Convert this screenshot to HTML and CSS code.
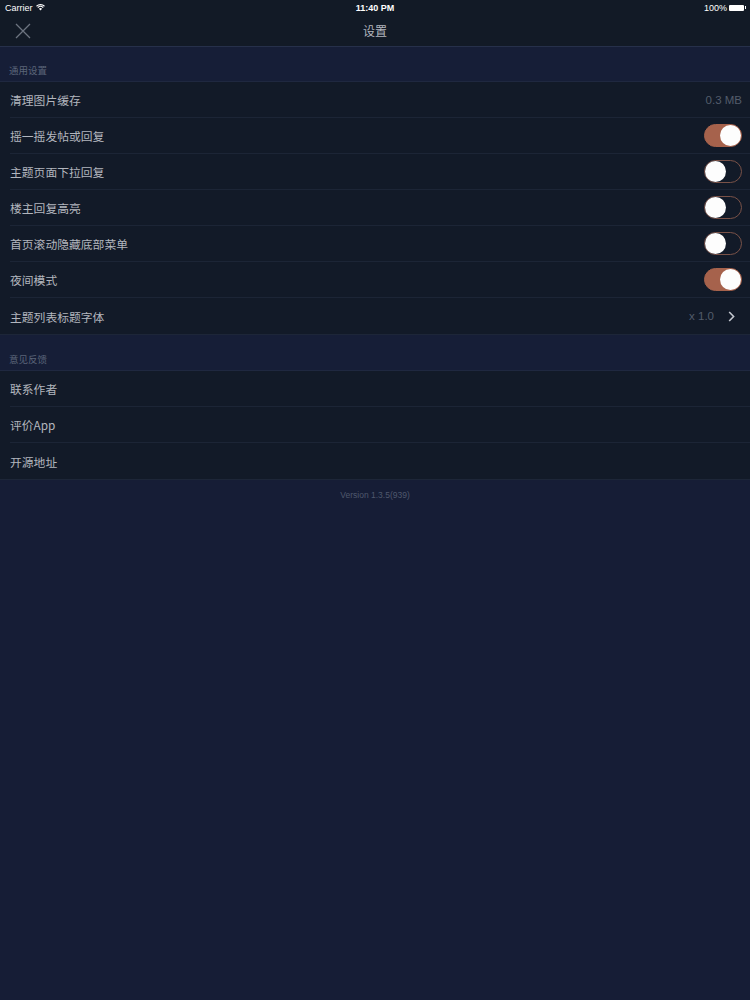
FILE: index.html
```html
<!DOCTYPE html>
<html lang="zh">
<head>
<meta charset="utf-8">
<link rel="stylesheet" href="styles.css">
</head>
<body>
<div class="top">
  <div class="status">
    <div class="st-left">Carrier
      <svg class="wifi" width="9" height="7" viewBox="0 0 12 9"><path d="M6 8.6 L3.9 6.2 A3 3 0 0 1 8.1 6.2 Z" fill="#fff"/><path d="M2.4 4.6 A5.2 5.2 0 0 1 9.6 4.6" stroke="#fff" stroke-width="1.5" fill="none"/><path d="M0.7 2.8 A7.6 7.6 0 0 1 11.3 2.8" stroke="#fff" stroke-width="1.5" fill="none"/></svg>
    </div>
    <div class="st-time">11:40 PM</div>
    <div class="st-right">100%
      <span class="battery"><span class="batt-body"></span><span class="batt-tip"></span></span>
    </div>
  </div>
  <div class="nav">
    <svg class="close" width="16" height="16" viewBox="0 0 16 16"><path d="M1 1 L15 15 M15 1 L1 15" stroke="#6d7481" stroke-width="1.3" fill="none"/></svg>
    <div class="title">设置</div>
  </div>
</div>

<div class="sec-head">通用设置</div>
<div class="group">
  <div class="row"><span class="label">清理图片缓存</span><span class="value">0.3 MB</span></div>
  <div class="row"><span class="label">摇一摇发帖或回复</span><span class="switch on"><span class="knob"></span></span></div>
  <div class="row"><span class="label">主题页面下拉回复</span><span class="switch"><span class="knob"></span></span></div>
  <div class="row"><span class="label">楼主回复高亮</span><span class="switch"><span class="knob"></span></span></div>
  <div class="row"><span class="label">首页滚动隐藏底部菜单</span><span class="switch"><span class="knob"></span></span></div>
  <div class="row"><span class="label">夜间模式</span><span class="switch on"><span class="knob"></span></span></div>
  <div class="row"><span class="label">主题列表标题字体</span><span class="value">x 1.0</span>
    <svg class="chev" width="7" height="11" viewBox="0 0 7 11"><path d="M1.2 1 L5.6 5.5 L1.2 10" stroke="#c3c7cf" stroke-width="1.6" fill="none"/></svg>
  </div>
</div>

<div class="sec-head sec2">意见反馈</div>
<div class="group">
  <div class="row"><span class="label">联系作者</span></div>
  <div class="row"><span class="label">评价App</span></div>
  <div class="row"><span class="label">开源地址</span></div>
</div>

<div class="version">Version 1.3.5(939)</div>
</body>
</html>
```

FILE: styles.css
```css
html, body {
  margin: 0;
  padding: 0;
}
body {
  width: 750px;
  min-height: 1000px;
  background: #161d36;
  font-family: "Noto Sans CJK SC", "Liberation Sans", sans-serif;
  color: #b2b6be;
}
.top {
  background: #121a26;
  border-bottom: 1px solid #26304a;
}
.status {
  height: 15px;
  display: flex;
  align-items: center;
  justify-content: space-between;
  padding: 0 4px 0 5px;
  font-family: "Liberation Sans", sans-serif;
  font-size: 9px;
  color: #ffffff;
  position: relative;
}
.st-left {
  display: flex;
  align-items: center;
  gap: 3px;
}
.st-time {
  position: absolute;
  left: 0;
  right: 0;
  text-align: center;
  font-weight: bold;
  pointer-events: none;
}
.st-right {
  display: flex;
  align-items: center;
  gap: 2px;
}
.battery {
  display: flex;
  align-items: center;
}
.batt-body {
  width: 15px;
  height: 6px;
  background: #ffffff;
  border-radius: 1px;
}
.batt-tip {
  width: 1px;
  height: 3px;
  background: #ffffff;
  margin-left: 1px;
}
.nav {
  height: 31px;
  display: flex;
  align-items: center;
  justify-content: center;
  position: relative;
}
.close {
  position: absolute;
  left: 15px;
  top: 8px;
}
.title {
  font-size: 12px;
  color: #b2b6be;
  margin-bottom: 1px;
}
.sec-head {
  height: 35px;
  box-sizing: border-box;
  padding: 16px 0 0 9px;
  font-size: 9.5px;
  color: #5b6579;
  background: #161e37;
  border-bottom: 1px solid #1f2840;
}
.sec2 {
  height: 36px;
  padding-top: 17px;
}
.group {
  background: #121a28;
  border-bottom: 1px solid #1d2638;
}
.row {
  height: 36px;
  box-sizing: border-box;
  margin-left: 10px;
  padding-right: 8px;
  display: flex;
  align-items: center;
  border-bottom: 1px solid #1c2536;
  font-size: 11.8px;
}
.row:last-child {
  border-bottom: none;
}
.label {
  flex: 1;
  color: #b2b6be;
}
.value {
  font-family: "Liberation Sans", sans-serif;
  font-size: 11.5px;
  color: #535c6b;
}
.chev {
  margin-left: 14px;
  margin-right: 7px;
}
.switch {
  width: 38px;
  height: 23px;
  box-sizing: border-box;
  border-radius: 12px;
  border: 1px solid #7a5248;
  background: #121a28;
  position: relative;
}
.switch.on {
  background: #a6624c;
  border-color: #a6624c;
}
.knob {
  position: absolute;
  top: 0;
  left: 0;
  width: 21px;
  height: 21px;
  border-radius: 50%;
  background: #fdfdfd;
}
.switch.on .knob {
  left: 15px;
}
.version {
  text-align: center;
  font-family: "Liberation Sans", sans-serif;
  font-size: 8.5px;
  color: #4f586d;
  margin-top: 10px;
}
```
